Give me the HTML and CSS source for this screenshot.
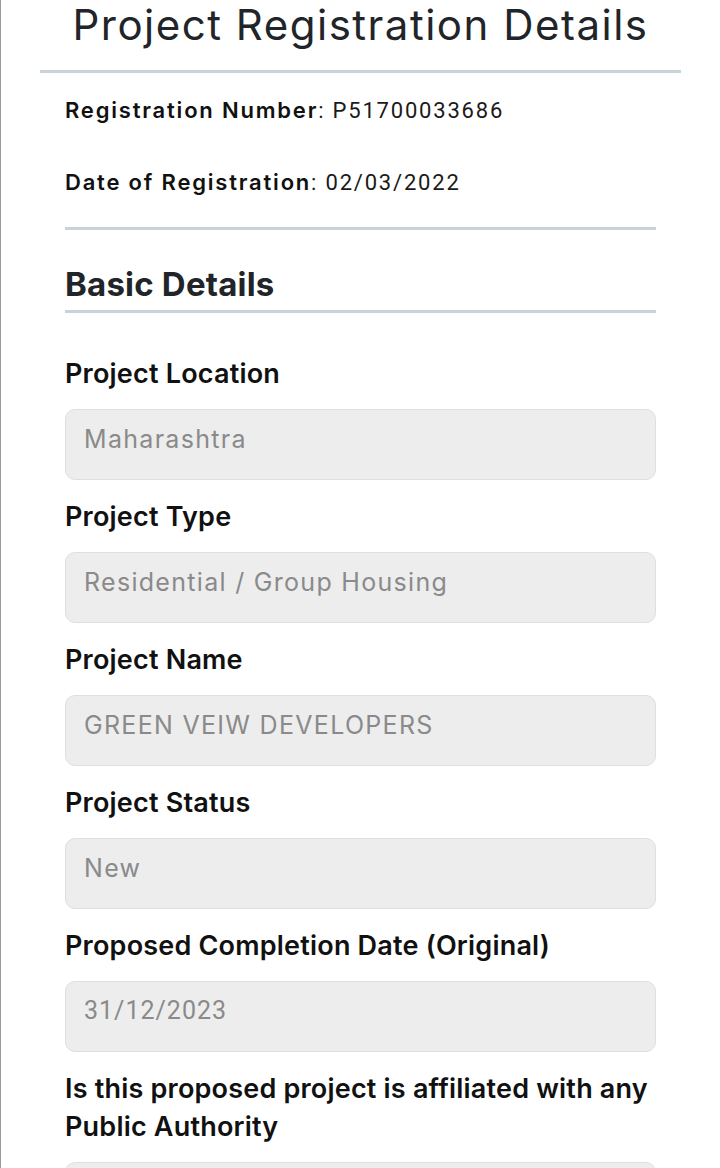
FILE: index.html
```
<!DOCTYPE html>
<html lang="en">
<head>
    <meta charset="UTF-8">
    <meta name="viewport" content="width=device-width, initial-scale=1.0">
    <title>Project Registration Details</title>
    <link rel="stylesheet" href="styles.css">
</head>
<body>

<div class="page">
    <!-- Page Title -->
    <div class="page-header">
        <h1>Project Registration Details</h1>
    </div>

    <div class="content">
        <!-- Registration Info -->
        <div class="reg-info">
            <p class="reg-row"><b>Registration Number</b>: P51700033686</p>
            <p class="reg-row"><b>Date of Registration</b>: 02/03/2022</p>
        </div>

        <!-- Basic Details -->
        <h2 class="section-title">Basic Details</h2>

        <div class="form-group">
            <label>Project Location</label>
            <div class="field-value">Maharashtra</div>
        </div>
        <div class="form-group">
            <label>Project Type</label>
            <div class="field-value">Residential / Group Housing</div>
        </div>
        <div class="form-group">
            <label>Project Name</label>
            <div class="field-value">GREEN VEIW DEVELOPERS</div>
        </div>
        <div class="form-group">
            <label>Project Status</label>
            <div class="field-value">New</div>
        </div>
        <div class="form-group">
            <label>Proposed Completion Date (Original)</label>
            <div class="field-value date">31/12/2023</div>
        </div>
        <div class="form-group">
            <label>Is this proposed project is affiliated with any Public Authority</label>
            <div class="field-value">No</div>
        </div>
    </div>
</div>

</body>
</html>
```

FILE: styles.css
```
body {
    margin: 0;
    font-family: Inter, "Noto Sans", sans-serif;
    background-color: #ffffff;
    color: #111111;
}

/* Page wrapper with the thin grey edge on the left */
.page {
    min-height: 100vh;
    border-left: 1px solid #999999;
    padding: 0 39px;
}

/* Title */
.page-header {
    border-bottom: 3px solid #c9d2d8;
    padding-bottom: 20px;
}

.page-header h1 {
    margin: 0;
    font-size: 42px;
    line-height: 50px;
    font-weight: 400;
    letter-spacing: 1.5px;
    color: #212529;
    text-align: center;
}

.content {
    padding: 0 25px;
}

/* Registration number and date */
.reg-info {
    padding-top: 22px;
    padding-bottom: 29px;
    border-bottom: 3px solid #c9d2d8;
}

.reg-row {
    margin: 0 0 41px;
    font-family: Roboto, sans-serif;
    font-size: 22px;
    line-height: 30px;
    letter-spacing: 1.8px;
    color: #1a1a1a;
}

.reg-row:last-child {
    margin-bottom: 0;
}

.reg-row b {
    font-family: Inter, sans-serif;
    font-size: 22px;
    font-weight: 600;
    letter-spacing: 1.8px;
    color: #111111;
}

/* Section heading */
.section-title {
    margin: 34px 0 42px;
    padding-bottom: 6px;
    font-size: 33px;
    line-height: 40px;
    font-weight: 700;
    letter-spacing: 0.2px;
    color: #212529;
    border-bottom: 3px solid #c9d2d8;
}

/* Form fields */
.form-group {
    margin-bottom: 18px;
}

.form-group label {
    display: block;
    margin-bottom: 16px;
    font-size: 27px;
    line-height: 38px;
    font-weight: 600;
    letter-spacing: 0.2px;
    color: #111111;
}

.field-value {
    box-sizing: border-box;
    height: 71px;
    padding: 14px 18px 0;
    font-size: 25px;
    line-height: 30px;
    letter-spacing: 1.3px;
    color: #8a8a8a;
    background-color: #ededed;
    border: 1px solid #dcdfe3;
    border-radius: 10px;
}

.field-value.date {
    font-family: Roboto, sans-serif;
    letter-spacing: 1px;
}
```
